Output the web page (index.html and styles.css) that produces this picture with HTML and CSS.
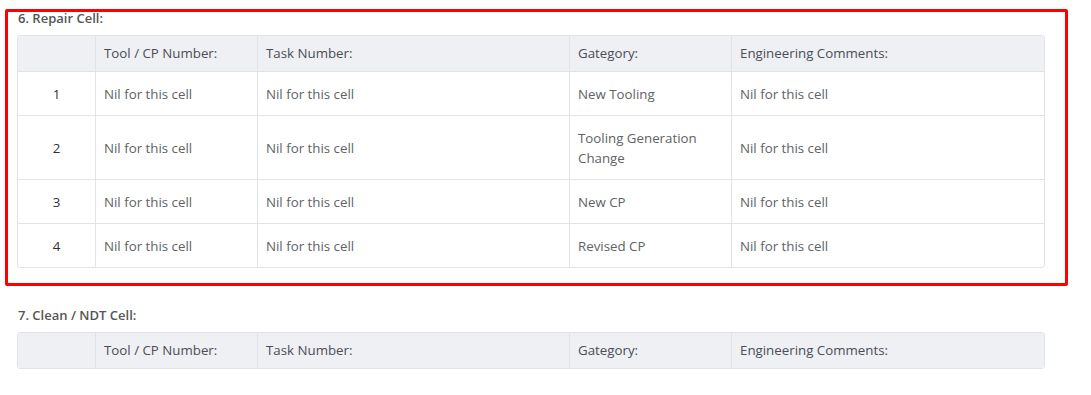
FILE: index.html
```html
<!DOCTYPE html>
<html lang="en">
<head>
    <meta charset="UTF-8">
    <title>Tooling Review</title>
    <link rel="stylesheet" href="styles.css">
</head>
<body>
    <div class="page">
        <div class="cell-block flagged">
            <h4 class="cell-title">6. Repair Cell:</h4>
            <table class="cell-table">
                <colgroup>
                    <col class="c-idx">
                    <col class="c-tool">
                    <col class="c-task">
                    <col class="c-cat">
                    <col class="c-comment">
                </colgroup>
                <thead>
                    <tr>
                        <th></th>
                        <th>Tool / CP Number:</th>
                        <th>Task Number:</th>
                        <th>Gategory:</th>
                        <th>Engineering Comments:</th>
                    </tr>
                </thead>
                <tbody>
                    <tr>
                        <td class="idx">1</td>
                        <td>Nil for this cell</td>
                        <td>Nil for this cell</td>
                        <td>New Tooling</td>
                        <td>Nil for this cell</td>
                    </tr>
                    <tr>
                        <td class="idx">2</td>
                        <td>Nil for this cell</td>
                        <td>Nil for this cell</td>
                        <td>Tooling Generation Change</td>
                        <td>Nil for this cell</td>
                    </tr>
                    <tr>
                        <td class="idx">3</td>
                        <td>Nil for this cell</td>
                        <td>Nil for this cell</td>
                        <td>New CP</td>
                        <td>Nil for this cell</td>
                    </tr>
                    <tr>
                        <td class="idx">4</td>
                        <td>Nil for this cell</td>
                        <td>Nil for this cell</td>
                        <td>Revised CP</td>
                        <td>Nil for this cell</td>
                    </tr>
                </tbody>
            </table>
        </div>

        <div class="cell-block">
            <h4 class="cell-title">7. Clean / NDT Cell:</h4>
            <table class="cell-table">
                <colgroup>
                    <col class="c-idx">
                    <col class="c-tool">
                    <col class="c-task">
                    <col class="c-cat">
                    <col class="c-comment">
                </colgroup>
                <thead>
                    <tr>
                        <th></th>
                        <th>Tool / CP Number:</th>
                        <th>Task Number:</th>
                        <th>Gategory:</th>
                        <th>Engineering Comments:</th>
                    </tr>
                </thead>
            </table>
        </div>
    </div>
</body>
</html>
```

FILE: styles.css
```css
*{
    margin: 0;
    padding: 0;
    box-sizing: border-box;
}
body{
    background: #fff;
    font-family: "Open Sans", "Noto Sans", sans-serif;
    font-size: 13.3px;
    color: #606266;
}
.page{
    padding: 9px 0 0 5px;
}
/* each cell section keeps the same frame so they line up */
.cell-block{
    width: 1063px;
    border: 3px solid transparent;
    border-radius: 2px;
    padding: 0 22px 15px 9px;
    margin-bottom: 20px;
}
.cell-block.flagged{
    border-color: #ff0000;
}
.cell-title{
    font-size: 13px;
    font-weight: 600;
    line-height: 13px;
    color: #555;
    padding: 0 0 10px 1px;
}
.cell-table{
    width: 1026px;
    table-layout: fixed;
    border-collapse: separate;
    border-spacing: 0;
    border: 1px solid #e1e3e8;
    border-radius: 3px;
    overflow: hidden;
}
.c-idx{ width: 78px; }
.c-tool{ width: 162px; }
.c-task{ width: 312px; }
.c-cat{ width: 162px; }
.c-comment{ width: 312px; }
.cell-table th,
.cell-table td{
    text-align: left;
    font-weight: normal;
    line-height: 20px;
    border-right: 1px solid #e1e3e8;
    vertical-align: middle;
}
.cell-table th:last-child,
.cell-table td:last-child{
    border-right: 0;
}
.cell-table th{
    background: #eff0f4;
    color: #4a4d55;
    padding: 7px 8px 8px;
}
.cell-table td{
    padding: 12px 8px 11px;
    border-top: 1px solid #e1e3e8;
}
.cell-table td.idx{
    text-align: center;
    color: #303133;
}
```
